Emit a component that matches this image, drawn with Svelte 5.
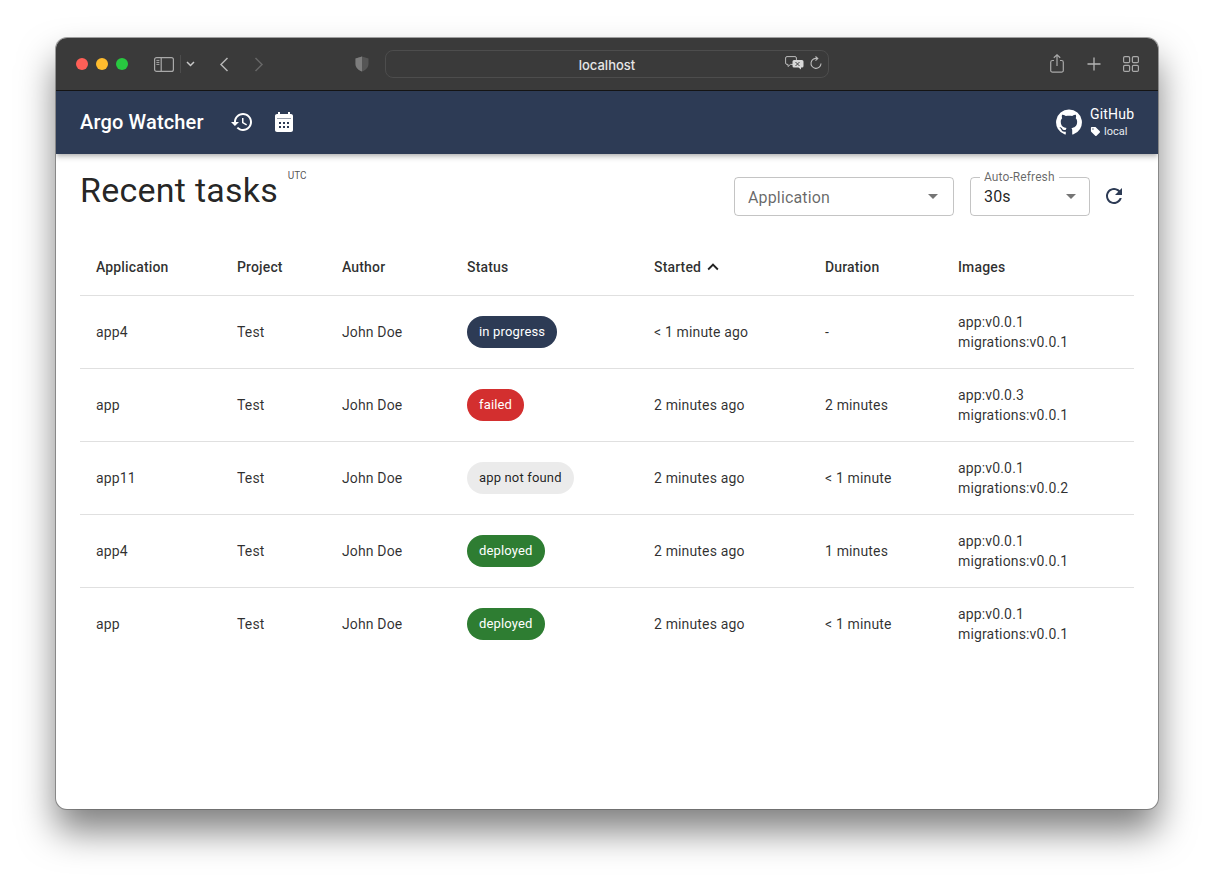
<script>
  const columns = ['Application', 'Project', 'Author', 'Status', 'Started', 'Duration', 'Images'];

  const tasks = [
    { app: 'app4', status: 'in progress', tone: 'progress', started: '< 1 minute ago', duration: '-', images: ['app:v0.0.1', 'migrations:v0.0.1'] },
    { app: 'app', status: 'failed', tone: 'failed', started: '2 minutes ago', duration: '2 minutes', images: ['app:v0.0.3', 'migrations:v0.0.1'] },
    { app: 'app11', status: 'app not found', tone: 'missing', started: '2 minutes ago', duration: '< 1 minute', images: ['app:v0.0.1', 'migrations:v0.0.2'] },
    { app: 'app4', status: 'deployed', tone: 'deployed', started: '2 minutes ago', duration: '1 minutes', images: ['app:v0.0.1', 'migrations:v0.0.1'] },
    { app: 'app', status: 'deployed', tone: 'deployed', started: '2 minutes ago', duration: '< 1 minute', images: ['app:v0.0.1', 'migrations:v0.0.1'] }
  ];
</script>

<div class="stage">
  <div class="window">
    <div class="chrome">
      <div class="lights">
        <span class="light red"></span>
        <span class="light yellow"></span>
        <span class="light green"></span>
      </div>
      <svg class="sidebar-icon" width="20" height="15" viewBox="0 0 20 15" fill="none" stroke="#a9a9a9" stroke-width="1.2">
        <rect x="0.6" y="0.6" width="18.8" height="13.8" rx="2" />
        <path d="M7.2 0.6v13.8" />
        <path d="M2.4 3.4h3M2.4 5.4h3M2.4 7.4h3" stroke-width="1" />
      </svg>
      <span class="divider"></span>
      <svg class="small-chevron" width="9" height="6" viewBox="0 0 9 6" fill="none" stroke="#c8c8c8" stroke-width="1.5">
        <path d="M1 1l3.5 3.5L8 1" />
      </svg>
      <svg class="back" width="10" height="15" viewBox="0 0 10 15" fill="none" stroke="#b5b5b5" stroke-width="1.5">
        <path d="M8.5 1L2 7.5 8.5 14" />
      </svg>
      <svg class="forward" width="10" height="15" viewBox="0 0 10 15" fill="none" stroke="#666" stroke-width="1.5">
        <path d="M1.5 1L8 7.5 1.5 14" />
      </svg>
      <svg class="shield" width="14" height="16" viewBox="0 0 14 16">
        <path d="M7 0.5L13.5 2.5V8c0 3.6-2.8 6-6.5 7.5C3.300 14 0.500 11.600 0.500 8V2.500z" fill="#555" />
        <path d="M7 0.5V15.500C3.300 14 0.500 11.600 0.500 8V2.500z" fill="#7d7d7d" />
      </svg>
      <div class="address">
        <span>localhost</span>
        <div class="address-icons">
          <svg width="19" height="14" viewBox="0 0 19 14">
            <path d="M2 0.600h8a1.400 1.400 0 0 1 1.400 1.400v5a1.400 1.400 0 0 1-1.400 1.400H5.500L3 10.500V8.400H2A1.400 1.400 0 0 1 0.600 7V2A1.400 1.400 0 0 1 2 0.600z" fill="none" stroke="#bbb" stroke-width="1" />
            <path d="M9 4h8a1.500 1.500 0 0 1 1.500 1.500v4.500a1.500 1.500 0 0 1-1.500 1.500h-1v2l-2.500-2H9a1.500 1.500 0 0 1-1.500-1.500V5.500A1.500 1.500 0 0 1 9 4z" fill="#d8d8d8" />
            <path d="M10.500 6l4 4M14.500 6l-4 4" stroke="#444" stroke-width="1" />
          </svg>
          <svg width="12" height="14" viewBox="0 0 12 14" fill="none" stroke="#bbb" stroke-width="1.100">
            <path d="M7.500 2.600A5 5 0 1 0 11 7.500" />
            <path d="M5.500 0.500l2.300 2.100L5.500 4.700" />
          </svg>
        </div>
      </div>
      <div class="chrome-actions">
        <svg class="share" width="14" height="19" viewBox="0 0 14 19" fill="none" stroke="#a9a9a9" stroke-width="1.200">
          <path d="M4 6.500H2.500A1.800 1.800 0 0 0 0.700 8.300v8.100a1.800 1.800 0 0 0 1.800 1.800h9a1.800 1.800 0 0 0 1.800-1.800V8.300a1.800 1.800 0 0 0-1.800-1.800H10" />
          <path d="M7 12V0.800M3.800 3.800L7 0.800l3.200 3" />
        </svg>
        <svg width="14" height="14" viewBox="0 0 14 14" fill="none" stroke="#b5b5b5" stroke-width="1.300">
          <path d="M7 0.500v13M0.500 7h13" />
        </svg>
        <svg class="tabs" width="16" height="16" viewBox="0 0 16 16" fill="none" stroke="#a9a9a9" stroke-width="1.200">
          <rect x="0.600" y="0.600" width="6" height="6" rx="1.200" />
          <rect x="9.400" y="0.600" width="6" height="6" rx="1.200" />
          <rect x="0.600" y="9.400" width="6" height="6" rx="1.200" />
          <rect x="9.400" y="9.400" width="6" height="6" rx="1.200" />
        </svg>
      </div>
    </div>

    <header class="navbar">
      <div class="brand">Argo Watcher</div>
      <svg class="nav-icon" viewBox="0 0 24 24"><path d="M13 3c-4.970 0-9 4.030-9 9H1l3.890 3.890.07.14L9 12H6c0-3.870 3.130-7 7-7s7 3.130 7 7-3.130 7-7 7c-1.930 0-3.680-.79-4.940-2.060l-1.420 1.420C8.270 19.990 10.510 21 13 21c4.970 0 9-4.030 9-9s-4.030-9-9-9zm-1 5v5l4.280 2.540.72-1.210-3.500-2.080V8H12z" /></svg>
      <svg class="nav-icon" viewBox="0 0 24 24"><path fill-rule="evenodd" d="M19 4h-1V2h-2v2H8V2H6v2H5c-1.110 0-1.990.9-1.990 2L3 20c0 1.100.89 2 2 2h14c1.100 0 2-.9 2-2V6c0-1.100-.9-2-2-2zM5 8.500h14V9H5zM7 12v2h2v-2zm4 0v2h2v-2zm4 0v2h2v-2zm-8 4v2h2v-2zm4 0v2h2v-2zm4 0v2h2v-2z" /></svg>
      <div class="spacer"></div>
      <svg class="github" viewBox="0 0 24 24"><path d="M12 1.270a11 11 0 00-3.480 21.460c.55.09.73-.28.73-.55v-1.840c-3.030.64-3.670-1.460-3.670-1.460-.55-1.290-1.280-1.650-1.280-1.650-.92-.65.1-.65.1-.65 1.100 0 1.730 1.100 1.730 1.100.92 1.650 2.570 1.200 3.210.92a2 2 0 01.64-1.470c-2.470-.27-5.040-1.190-5.040-5.500 0-1.100.46-2.100 1.200-2.840a3.760 3.760 0 010-2.930s.91-.28 3.110 1.100c1.800-.49 3.700-.49 5.500 0 2.100-1.380 3.020-1.100 3.020-1.100a3.760 3.760 0 010 2.930c.83.74 1.200 1.740 1.200 2.940 0 4.210-2.570 5.130-5.040 5.400.45.37.82.92.82 2.020v3.030c0 .27.1.64.73.55A11 11 0 0012 1.270" /></svg>
      <div class="repo">
        <div class="repo-name">GitHub</div>
        <div class="repo-tag">
          <svg viewBox="0 0 24 24"><path d="m21.410 11.410-8.830-8.830c-.37-.37-.88-.58-1.410-.58H4c-1.100 0-2 .9-2 2v7.170c0 .53.21 1.040.59 1.410l8.830 8.830c.78.78 2.050.78 2.830 0l7.170-7.170c.78-.78.78-2.040-.01-2.830zM6.500 8C5.670 8 5 7.330 5 6.500S5.670 5 6.500 5 8 5.670 8 6.500 7.330 8 6.500 8z" /></svg>
          local
        </div>
      </div>
    </header>

    <main class="content">
      <div class="toolbar">
        <h1>Recent tasks <sup>UTC</sup></h1>
        <div class="filters">
          <div class="select app-select">
            <span class="placeholder">Application</span>
            <span class="caret"></span>
          </div>
          <div class="select refresh-select">
            <span class="legend">Auto-Refresh</span>
            <span>30s</span>
            <span class="caret"></span>
          </div>
          <svg class="refresh" viewBox="0 0 24 24"><path d="M17.650 6.350C16.200 4.900 14.210 4 12 4c-4.420 0-7.990 3.580-7.990 8s3.570 8 7.990 8c3.730 0 6.840-2.550 7.730-6h-2.080c-.82 2.330-3.040 4-5.650 4-3.310 0-6-2.690-6-6s2.690-6 6-6c1.660 0 3.140.69 4.220 1.780L13 11h7V4l-2.350 2.350z" /></svg>
        </div>
      </div>

      <table>
        <colgroup>
          <col style="width:141px" />
          <col style="width:105px" />
          <col style="width:125px" />
          <col style="width:187px" />
          <col style="width:171px" />
          <col style="width:133px" />
          <col />
        </colgroup>
        <thead>
          <tr>
            {#each columns as column}
              <th>
                {column}
                {#if column === 'Started'}
                  <svg class="sort" viewBox="0 0 24 24"><path d="M7.410 15.410 12 10.830l4.590 4.580L18 14l-6-6-6 6z" /></svg>
                {/if}
              </th>
            {/each}
          </tr>
        </thead>
        <tbody>
          {#each tasks as task}
            <tr>
              <td>{task.app}</td>
              <td>Test</td>
              <td>John Doe</td>
              <td><span class="chip {task.tone}">{task.status}</span></td>
              <td>{task.started}</td>
              <td>{task.duration}</td>
              <td class="images">
                {#each task.images as image}
                  <div>{image}</div>
                {/each}
              </td>
            </tr>
          {/each}
        </tbody>
      </table>
    </main>
  </div>
</div>

<style>
  :global(body) {
    margin: 0;
    background: #fff;
    font-family: Roboto, "Liberation Sans", sans-serif;
  }
  .stage {
    padding: 38px 56px 74px;
    height: 771px;
    overflow: hidden;
  }
  .window {
    width: 1102px;
    height: 771px;
    border-radius: 11px;
    overflow: hidden;
    background: #fff;
    box-shadow: 0 0 0 1px rgba(90, 90, 90, 0.55), 0 22px 36px rgba(0, 0, 0, 0.5);
  }

  .chrome {
    height: 52px;
    background: #3a3a3a;
    border-bottom: 1px solid #161616;
    display: flex;
    align-items: center;
    padding-left: 20px;
  }
  .lights {
    display: flex;
    gap: 8px;
  }
  .light {
    width: 12px;
    height: 12px;
    border-radius: 50%;
  }
  .red { background: #ff5f57; }
  .yellow { background: #febc2e; }
  .green { background: #28c840; }
  .sidebar-icon { margin-left: 26px; }
  .divider {
    width: 1px;
    height: 18px;
    margin-left: 6px;
    background: #4d4d4d;
  }
  .small-chevron { margin-left: 5px; }
  .back { margin-left: 24px; }
  .forward { margin-left: 25px; }
  .shield { margin-left: 91px; }
  .address {
    margin-left: 16px;
    width: 442px;
    height: 25px;
    padding-top: 1px;
    border: 1px solid #4d4d4d;
    border-radius: 8px;
    position: relative;
    display: flex;
    align-items: center;
    justify-content: center;
    color: #e6e6e6;
    font-family: Inter, Roboto, sans-serif;
    font-size: 13px;
    font-weight: 500;
  }
  .address-icons {
    position: absolute;
    right: 6px;
    top: 5px;
    display: flex;
    align-items: center;
    gap: 6px;
  }
  .chrome-actions {
    margin-left: auto;
    padding-right: 19px;
    display: flex;
    align-items: center;
    gap: 23px;
  }
  .share { margin-bottom: 2px; }
  .tabs { margin-left: -1px; }

  .navbar {
    height: 62px;
    padding: 0 24px 1px;
    background: #2d3b55;
    display: flex;
    align-items: center;
    color: #fff;
    box-shadow: 0 2px 4px -1px rgba(0, 0, 0, 0.2), 0 4px 5px rgba(0, 0, 0, 0.14);
    position: relative;
  }
  .brand {
    font-size: 20px;
    font-weight: 500;
    letter-spacing: 0.15px;
    width: 132px;
    white-space: nowrap;
  }
  .nav-icon {
    width: 24px;
    height: 24px;
    fill: #fff;
    margin-left: 18px;
  }
  .spacer { flex: 1; }
  .github {
    width: 28px;
    height: 28px;
    fill: #fff;
    margin-right: 7px;
  }
  .repo { width: 44px; }
  .repo-name {
    font-size: 14px;
    line-height: 19px;
    letter-spacing: 0.2px;
  }
  .repo-tag {
    display: flex;
    align-items: center;
    gap: 3px;
    font-size: 11px;
    line-height: 16px;
    color: #e8ebf0;
  }
  .repo-tag svg {
    width: 11px;
    height: 11px;
    fill: #fff;
  }

  .content {
    padding: 0 24px;
  }
  .toolbar {
    display: flex;
    justify-content: space-between;
    align-items: flex-start;
    height: 84px;
  }
  h1 {
    margin: 16px 0 0;
    font-size: 34px;
    line-height: 40px;
    font-weight: 400;
    color: rgba(0, 0, 0, 0.87);
    letter-spacing: 0.25px;
  }
  sup {
    font-size: 10px;
    line-height: 0;
    position: relative;
    top: -7px;
    left: 1px;
    vertical-align: 16px;
    letter-spacing: 0;
    color: rgba(0, 0, 0, 0.7);
  }
  .filters {
    display: flex;
    align-items: center;
    gap: 16px;
    margin-top: 23px;
  }
  .select {
    box-sizing: border-box;
    height: 39px;
    border: 1px solid rgba(0, 0, 0, 0.23);
    border-radius: 4px;
    display: flex;
    align-items: center;
    padding-left: 13px;
    position: relative;
    font-size: 16px;
    letter-spacing: 0.15px;
    color: rgba(0, 0, 0, 0.87);
  }
  .app-select {
    width: 220px;
    padding-top: 1px;
  }
  .refresh-select { width: 120px; }
  .placeholder { color: rgba(0, 0, 0, 0.6); }
  .caret {
    position: absolute;
    right: 15px;
    top: 16px;
    border-left: 5px solid transparent;
    border-right: 5px solid transparent;
    border-top: 5px solid rgba(0, 0, 0, 0.54);
  }
  .refresh-select .caret { right: 13px; }
  .legend {
    position: absolute;
    left: 9px;
    top: -8px;
    padding: 0 4px;
    background: #fff;
    font-size: 12px;
    line-height: 14px;
    color: rgba(0, 0, 0, 0.6);
    letter-spacing: 0.1px;
  }
  .refresh {
    width: 24px;
    height: 24px;
    fill: #2d3b55;
    margin: 0 8px 2px -4px;
  }

  table {
    width: 100%;
    table-layout: fixed;
    border-collapse: collapse;
    font-size: 14px;
    letter-spacing: 0.15px;
    color: rgba(0, 0, 0, 0.82);
  }
  th {
    height: 57px;
    padding: 2px 16px 0;
    text-align: left;
    font-weight: 500;
    border-bottom: 1px solid #e0e0e0;
    white-space: nowrap;
    box-sizing: border-box;
  }
  td {
    height: 73px;
    padding: 0 16px;
    border-bottom: 1px solid #e0e0e0;
    box-sizing: border-box;
    white-space: nowrap;
  }
  tbody tr:last-child td { border-bottom: none; }
  .images { line-height: 20px; }
  .sort {
    width: 22px;
    height: 22px;
    vertical-align: -6px;
    fill: rgba(0, 0, 0, 0.87);
    margin-left: -3px;
  }
  .chip {
    display: inline-block;
    height: 32px;
    line-height: 31px;
    padding: 0 12px;
    border-radius: 16px;
    font-size: 13px;
    letter-spacing: 0.16px;
    color: #fff;
    vertical-align: middle;
  }
  .progress { background: #2d3b55; }
  .failed { background: #d32f2f; }
  .missing {
    background: rgba(0, 0, 0, 0.08);
    color: rgba(0, 0, 0, 0.87);
  }
  .deployed { background: #2e7d32; }
</style>
